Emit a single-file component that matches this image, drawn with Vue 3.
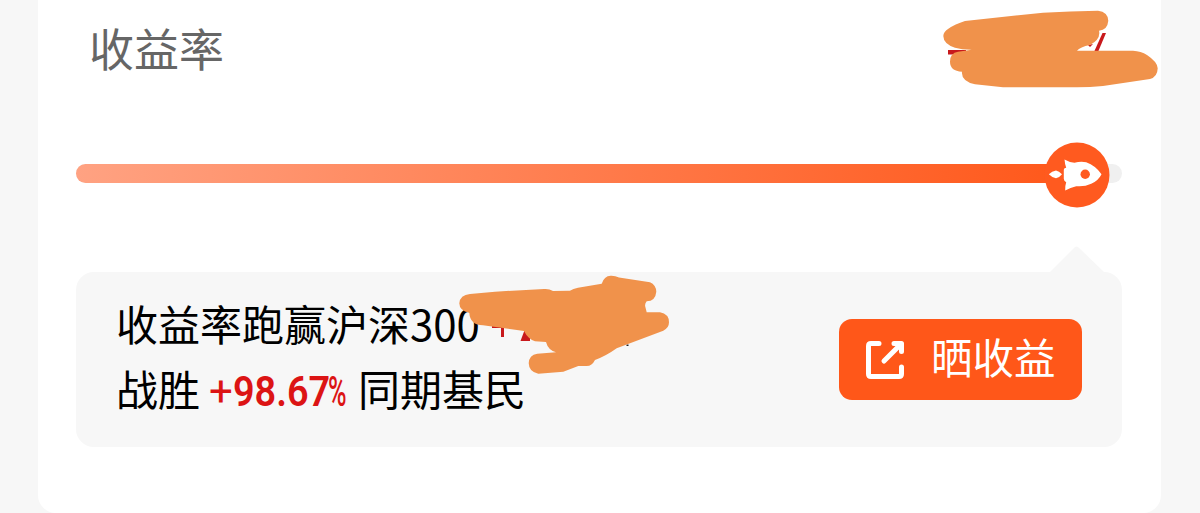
<script setup>
import { computed, ref } from "vue";

const label = ref("收益率");
const progress = ref(95.9);
const beat = ref("98.67");

const fillStyle = computed(() => ({ width: `${progress.value}%` }));
const thumbStyle = computed(() => ({ left: `${progress.value - 0.2}%` }));
</script>

<template>
  <main class="page">
    <section class="card">
      <header class="card-head">
        <h2>{{ label }}</h2>
      </header>

      <div class="track">
        <div class="track-fill" :style="fillStyle"></div>
        <div class="thumb" :style="thumbStyle">
          <svg viewBox="0 0 65 65">
            <path
              class="rocket"
              d="M20 17Q24 19.500 30 20.300Q36 18.500 41.700 19.700Q51 23 57 31.700Q54 38 46.700 41.300Q40 44.500 31.700 43.700Q26 45 20.700 48Q20.500 43 21.700 39.700Q19.300 38.500 19.300 36.300V27.300Q19.500 25.500 21.700 25.300Q20.300 21 20 17Z"
            />
            <path class="rocket" d="M4.300 31.700Q7.500 28.500 11.500 28Q14.500 28.500 17.500 31.700Q14.500 35.500 11.500 35.700Q7.500 35 4.300 31.700Z" />
            <circle class="window" cx="40.7" cy="31.7" r="4.700" />
          </svg>
        </div>
      </div>

      <div class="panel">
        <svg class="caret" viewBox="0 0 56 27">
          <path d="M0 27L25.5 1.5Q27.5-.5 29.5 1.5L56 27Z" />
        </svg>

        <div class="summary">
          <p>收益率跑赢沪深300</p>
          <p>
            <span>战胜</span>
            <span class="rate">
              <span class="sign">+</span>
              <span class="digits">{{ beat }}</span>
              <span class="percent">%</span>
            </span>
            <span>同期基民</span>
          </p>
        </div>

        <button class="share">
          <svg viewBox="0 0 38 38">
            <path d="M13 2.500H5Q2.500 2.500 2.500 5V33Q2.500 35.500 5 35.500H33Q35.500 35.500 35.500 33V26" />
            <path d="M18 20L33 5M28 2.500H35.500V10.500" />
          </svg>
          <span>晒收益</span>
        </button>
      </div>
    </section>

    <!-- marker strokes hiding the private amounts -->
    <svg class="marker" viewBox="0 0 1200 513">
      <g class="hidden-amount">
        <path d="M948 50H966V54.5H948Z" />
        <path d="M1102.500 33H1106L1098 52H1094Z" />
        <path d="M1088 45L1093 44L1090 47Z" />
        <path d="M492 325.500H509V328H504V337H501V328H492Z" />
        <path d="M525 329L530 331V341H520.500Z" />
      </g>
      <path class="dot" d="M626.500 344.500H628.500V346H626.500Z" />
      <path
        d="M948 29Q955 24 965 21L1043 12.700Q1070 11 1098 10.700Q1108 12 1108.300 20.700Q1107.500 30 1099 30.700Q1101 39 1090 45Q1080 47 1077 50.700H1133Q1141 51 1147 55Q1157.500 62 1157.700 68.300Q1157.500 77 1150 79L1103 86Q1090 87.200 1077 87.300H1003L975 84.300Q961 81 962 71.700Q950 71 950 61.700Q950 53 958 51.700L971.700 49.700Q962 49.800 955 47.700Q943.500 44 943.300 36Q943.500 32 948 29Z"
      />
      <path
        d="M470 294L495 291.700L544 289Q549 288.500 553 291L570 290.700Q573 288.500 578 287.700L601.700 283.700Q604 276 610.700 275.700Q615 275.500 619 277.500L650 282.300Q656 285 656.300 291.700Q655.500 301 646.700 301.300Q644.500 304 645.300 306.700L646.700 312.300H660Q669 314 669 322.300Q669 328 663.300 330.700L616.700 348.300Q606 356 595 360Q592 366 586.700 366H578.300L563.300 371.700L538.300 373.700Q529 372 528.700 363.300Q529 355 537.300 353.700L556 352.300Q548 350 546 342L535 341.300Q528 339 524 331L483 325.300Q470 325 469.300 312.700Q459.500 311 459.300 303.300Q460 295 470 294Z"
      />
    </svg>
  </main>
</template>

<style>
body {
  background: #f7f7f7;
}
</style>

<style scoped>
.page {
  height: 513px;
  padding: 0 39px 0 38px;
  box-sizing: border-box;
  overflow: hidden;
  background: #f7f7f7;
  font-family: "Noto Sans CJK SC", sans-serif;
}

.card {
  height: 513px;
  padding: 0 39px 0 38px;
  box-sizing: border-box;
  border-radius: 0 0 18px 18px;
  background: #fff;
}

.card-head {
  height: 164px;
  padding: 16px 14px 0 13px;
  box-sizing: border-box;
}

h2 {
  margin: 0;
  color: #666;
  font-size: 45px;
  font-weight: 400;
  line-height: 64px;
}

.track {
  position: relative;
  height: 19px;
  border-radius: 10px;
  background: #f0f0f0;
}

.track-fill {
  height: 100%;
  border-radius: 10px 0 0 10px;
  background: linear-gradient(90deg, #ffa282, #ff5719);
}

.thumb {
  position: absolute;
  top: 50%;
  width: 65px;
  height: 65px;
  margin-top: 1px;
  border-radius: 50%;
  background: #ff5a1f;
  transform: translate(-50%, -50%);
}

.thumb svg {
  display: block;
  width: 65px;
  height: 65px;
}

.rocket {
  fill: #fff;
}

.window {
  fill: #ff5a1f;
}

.panel {
  position: relative;
  display: flex;
  align-items: center;
  justify-content: space-between;
  height: 175px;
  margin-top: 89px;
  padding: 0 40px;
  box-sizing: border-box;
  border-radius: 18px;
  background: #f7f7f7;
}

.caret {
  position: absolute;
  top: -26px;
  right: 17px;
  width: 56px;
  height: 27px;
  fill: #f7f7f7;
}

.summary {
  padding-bottom: 9px;
}

.summary p {
  display: flex;
  align-items: center;
  height: 65px;
  margin: 0;
  color: #000;
  font-size: 42px;
  line-height: 65px;
  white-space: nowrap;
}

.rate {
  display: flex;
  width: 140px;
  margin: 0 9px;
  padding-top: 7px;
  color: #dc1414;
  font-family: Roboto, sans-serif;
}

.sign,
.digits,
.percent {
  transform-origin: 0 50%;
}

.sign {
  width: 24px;
}

.digits {
  width: 95px;
  font-weight: 600;
  transform: scaleX(0.9);
}

.percent {
  width: 20px;
  font-weight: 500;
  transform: scaleX(0.6);
}

.share {
  display: flex;
  align-items: center;
  gap: 27px;
  width: 243px;
  height: 81px;
  padding: 0 27px;
  border: none;
  border-radius: 13px;
  background: #ff5719;
  color: #fff;
  font-family: inherit;
  font-size: 41.5px;
  line-height: 60px;
  white-space: nowrap;
}

.share span {
  padding-bottom: 7px;
}

.share svg {
  flex: none;
  width: 38px;
  height: 38px;
  fill: none;
  stroke: #fff;
  stroke-width: 5;
  stroke-linecap: round;
  stroke-linejoin: round;
}

.marker {
  position: absolute;
  top: 0;
  left: 0;
  width: 1200px;
  height: 513px;
  fill: #f0924b;
  pointer-events: none;
}

.hidden-amount {
  fill: #c8191c;
}

.dot {
  fill: #222;
}
</style>
